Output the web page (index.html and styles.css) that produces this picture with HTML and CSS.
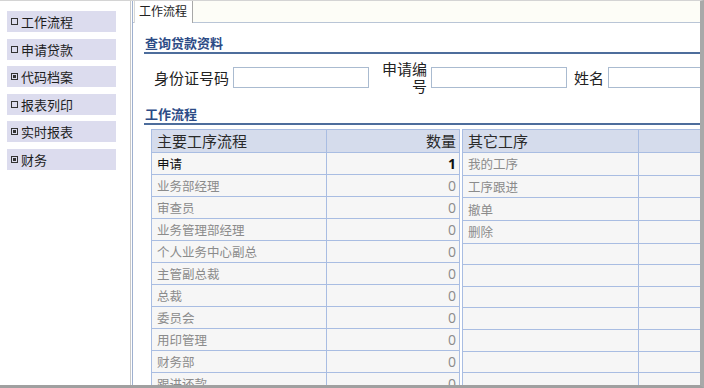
FILE: index.html
```html
<!DOCTYPE html>
<html lang="zh">
<head>
<meta charset="utf-8">
<link rel="stylesheet" href="styles.css">
</head>
<body>
<div class="frame">
  <aside class="sidebar">
    <ul class="nav">
      <li class="nav-item"><span class="ico box"></span>工作流程</li>
      <li class="nav-item"><span class="ico box"></span>申请贷款</li>
      <li class="nav-item"><span class="ico plus"></span>代码档案</li>
      <li class="nav-item"><span class="ico box"></span>报表列印</li>
      <li class="nav-item"><span class="ico plus"></span>实时报表</li>
      <li class="nav-item"><span class="ico plus"></span>财务</li>
    </ul>
  </aside>
  <main class="main">
    <div class="tabstrip">
      <div class="tab">工作流程</div>
    </div>
    <div class="content">
      <h2 class="section">查询贷款资料</h2>
      <div class="form-row">
        <label class="lbl lbl-id">身份证号码</label>
        <input class="field" type="text">
        <label class="lbl lbl-wrap">申请编号</label>
        <input class="field" type="text">
        <label class="lbl lbl-name">姓名</label>
        <input class="field field-last" type="text">
      </div>
      <h2 class="section section-2">工作流程</h2>
      <div class="tables">
        <table class="grid grid-main">
          <colgroup><col class="w-name"><col class="w-num"></colgroup>
          <thead>
            <tr><th>主要工序流程</th><th class="c-num">数量</th></tr>
          </thead>
          <tbody>
            <tr class="active"><td>申请</td><td class="num">1</td></tr>
            <tr><td>业务部经理</td><td class="num">0</td></tr>
            <tr><td>审查员</td><td class="num">0</td></tr>
            <tr><td>业务管理部经理</td><td class="num">0</td></tr>
            <tr><td>个人业务中心副总</td><td class="num">0</td></tr>
            <tr><td>主管副总裁</td><td class="num">0</td></tr>
            <tr><td>总裁</td><td class="num">0</td></tr>
            <tr><td>委员会</td><td class="num">0</td></tr>
            <tr><td>用印管理</td><td class="num">0</td></tr>
            <tr><td>财务部</td><td class="num">0</td></tr>
            <tr><td>跟进还款</td><td class="num">0</td></tr>
          </tbody>
        </table>
        <table class="grid grid-other">
          <colgroup><col class="w-other"><col class="w-extra"></colgroup>
          <thead>
            <tr><th>其它工序</th><th></th></tr>
          </thead>
          <tbody>
            <tr><td>我的工序</td><td></td></tr>
            <tr><td>工序跟进</td><td></td></tr>
            <tr><td>撤单</td><td></td></tr>
            <tr><td>删除</td><td></td></tr>
            <tr><td></td><td></td></tr>
            <tr><td></td><td></td></tr>
            <tr><td></td><td></td></tr>
            <tr><td></td><td></td></tr>
            <tr><td></td><td></td></tr>
            <tr><td></td><td></td></tr>
            <tr><td></td><td></td></tr>
          </tbody>
        </table>
      </div>
    </div>
  </main>
</div>
</body>
</html>
```

FILE: styles.css
```css
* { box-sizing: border-box; }
html, body {
  margin: 0;
  padding: 0;
  width: 704px;
  height: 388px;
  overflow: hidden;
  background: #ffffff;
  font-family: "Noto Sans CJK SC", "Noto Sans", sans-serif;
}
.frame {
  display: flex;
  width: 704px;
  height: 388px;
  border-top: 1px solid #d4d4d4;
  border-right: 4px solid #a9a9a9;
  border-bottom: 3px solid #a0a0a0;
  overflow: hidden;
}
.sidebar {
  flex: 0 0 131px;
  border-right: 1px solid #c9c9c9;
  padding: 10px 0 0 7px;
}
.nav {
  list-style: none;
  margin: 0;
  padding: 0;
  display: flex;
  flex-direction: column;
  gap: 6.6px;
}
.nav-item {
  width: 109px;
  height: 21px;
  background: #dcdcee;
  color: #1e1e1e;
  font-size: 13px;
  line-height: 21px;
  display: flex;
  align-items: center;
  padding-left: 4px;
}
.ico {
  display: inline-block;
  width: 7px;
  height: 7px;
  border: 1px solid #333;
  margin-right: 3px;
  position: relative;
}
.ico.plus::after {
  content: "";
  position: absolute;
  left: 1px;
  top: 1px;
  width: 3px;
  height: 3px;
  background: #333;
}
.main {
  flex: 1;
  margin-left: 1px;
  border-left: 1px solid #9fb0cf;
  display: flex;
  flex-direction: column;
  min-width: 0;
}
.tabstrip {
  height: 22px;
  flex: 0 0 22px;
  background: #fdfdf7;
  border-bottom: 1px solid #b9c5d6;
  padding-left: 1px;
  display: flex;
  align-items: flex-end;
}
.tab {
  height: 22px;
  margin-bottom: -1px;
  background: #ffffff;
  border-right: 1px solid #a8a8a8;
  border-left: 1px solid #d8d8d8;
  padding: 0 5px 0 4px;
  font-size: 12px;
  line-height: 20px;
  color: #222;
}
.content {
  padding: 11px 0 0 11px;
  overflow: hidden;
}
.section {
  margin: 0;
  font-size: 13px;
  font-weight: bold;
  color: #2c4b86;
  line-height: 18px;
  padding-left: 1px;
  border-bottom: 2px solid #4d6d9c;
}
.form-row {
  display: flex;
  align-items: center;
  height: 46px;
  font-size: 15px;
  color: #222;
}
.lbl {
  flex: 0 0 auto;
  text-align: right;
  line-height: 17px;
}
.lbl-id { width: 89px; padding-right: 4px; }
.lbl-wrap { width: 62px; padding-right: 4px; padding-left: 12px; }
.lbl-name { width: 41px; padding-right: 4px; }
.field {
  flex: 0 0 136px;
  width: 136px;
  height: 21px;
  border: 1px solid #aabbd0;
  background: #fff;
  margin: 0;
}
.field-last { flex-basis: 120px; width: 120px; }
.section-2 { margin-top: 5px; }
.tables {
  display: flex;
  gap: 2px;
  margin: 4px 0 0 7px;
  width: 700px;
}
.grid {
  border-collapse: collapse;
  table-layout: fixed;
  background: #f6f6f6;
  flex: 0 0 auto;
}
.grid-main { width: 308px; }
.grid-other { width: 260px; }
.w-name { width: 175px; }
.w-num { width: 133px; }
.w-other { width: 176px; }
.w-extra { width: 84px; }
.grid th, .grid td {
  border: 1px solid #a9bde2;
  height: 21px;
  line-height: 21px;
  padding: 0 3px 0 5px;
  font-weight: normal;
  white-space: nowrap;
  overflow: hidden;
}
.grid th {
  background: #d5dcec;
  height: 22px;
  line-height: 22px;
  font-size: 15px;
  color: #2a2a2a;
  text-align: left;
}
.grid td {
  font-size: 12.5px;
  color: #8b8b8b;
}
.grid th.c-num { text-align: right; }
.grid td.num {
  text-align: right;
  font-family: "Open Sans", "Noto Sans", sans-serif;
  font-size: 14px;
}
.grid tr.active td { color: #111; }
.grid tr.active td.num { font-weight: bold; color: #111; }
```
